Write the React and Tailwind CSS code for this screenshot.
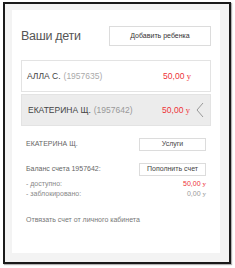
export default function App() {
  const rub = <span className="font-['Liberation_Serif',serif]">у</span>;
  return (
    <div className="w-[235px] h-[268px] bg-white pt-[2px] pl-[3px] font-['Liberation_Sans',Arial,sans-serif]">
      <div className="w-[228px] h-[262px] border-2 border-[#1a1a1a] bg-[#f3f3f3] pt-[6px] pl-[7px] shadow-[1px_1px_1px_rgba(0,0,0,0.3)]">
        <div className="w-[208px] h-[243px] bg-white pl-[9px] pr-[9px] pt-[16px]">
          <div className="flex items-center justify-between h-[20px]">
            <span className="text-[12.5px] text-[#555] tracking-[-0.3px]">Ваши дети</span>
            <div className="w-[102px] h-[20px] border border-[#dcdcdc] flex items-center justify-center text-[7px] text-[#333]">
              Добавить ребенка
            </div>
          </div>
          <div className="mt-[14px] h-[32px] border border-[#e3e3e3] flex items-center pl-[5px] pr-[19px] text-[8.5px]">
            <span className="text-[#444]">АЛЛА С.</span>
            <span className="text-[#aaa] ml-[3px]">(1957635)</span>
            <span className="ml-auto text-[#ee3338]">50,00 {rub}</span>
          </div>
          <div className="mt-[2px] h-[32px] bg-[#ececec] border border-[#e3e3e3] flex items-center pl-[6px] pr-[5px] text-[8.5px]">
            <span className="text-[#444]">ЕКАТЕРИНА Щ.</span>
            <span className="text-[#999] ml-[3px]">(1957642)</span>
            <span className="ml-auto text-[#ee3338]">50,00 {rub}</span>
            <svg width="10" height="16" viewBox="0 0 10 16" className="ml-[5px]">
              <path d="M8 1 L2 8 L8 15" fill="none" stroke="#999" strokeWidth="1" />
            </svg>
          </div>
          <div className="pl-[5px] pr-[5px] text-[7px] text-[#666]">
            <div className="mt-[11px] flex items-center justify-between h-[14px]">
              <span>ЕКАТЕРИНА Щ.</span>
              <div className="w-[67px] h-[13px] border border-[#dcdcdc] flex items-center justify-center text-[#444]">Услуги</div>
            </div>
            <div className="mt-[12px] flex items-center justify-between h-[13px]">
              <span>Баланс счета 1957642:</span>
              <div className="w-[67px] h-[13px] border border-[#dcdcdc] flex items-center justify-center text-[#444]">Пополнить счет</div>
            </div>
            <div className="mt-[3px] flex items-center justify-between h-[10px] text-[#888]">
              <span>- доступно:</span>
              <span className="text-[#ee3338]">50,00 {rub}</span>
            </div>
            <div className="flex items-center justify-between h-[10px] text-[#888]">
              <span>- заблокировано:</span>
              <span className="text-[#999]">0,00 {rub}</span>
            </div>
            <div className="mt-[16px] text-[#777]">Отвязать счет от личного кабинета</div>
          </div>
        </div>
      </div>
    </div>
  );
}
